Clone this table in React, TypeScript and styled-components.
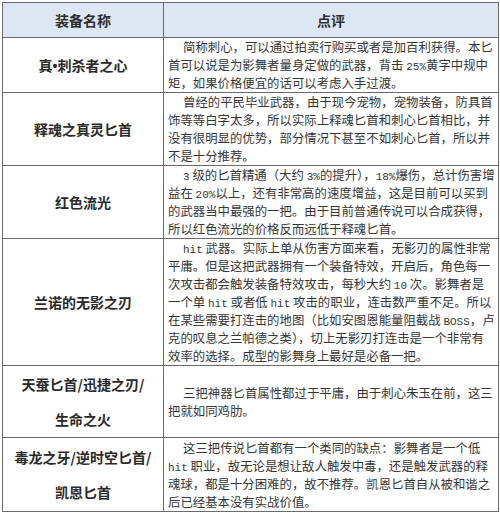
// -- basic library --
import React from 'react';
import styled, { createGlobalStyle } from 'styled-components';

// -- external datas --
type Item = { name: string[]; lines: string[]; height: number };

const items: Item[] = [
  {
    name: ['真•刺杀者之心'],
    height: 55,
    lines: [
      '简称刺心，可以通过拍卖行购买或者是加百利获得。本匕',
      '首可以说是为影舞者量身定做的武器，背击 25%黄字中规中',
      '矩，如果价格便宜的话可以考虑入手过渡。',
    ],
  },
  {
    name: ['释魂之真灵匕首'],
    height: 72,
    lines: [
      '曾经的平民毕业武器，由于现今宠物，宠物装备，防具首',
      '饰等等白字太多，所以实际上释魂匕首和刺心匕首相比，并',
      '没有很明显的优势，部分情况下甚至不如刺心匕首，所以并',
      '不是十分推荐。',
    ],
  },
  {
    name: ['红色流光'],
    height: 73,
    lines: [
      '3 级的匕首精通（大约 3%的提升），18%爆伤，总计伤害增',
      '益在 20%以上，还有非常高的速度增益，这是目前可以买到',
      '的武器当中最强的一把。由于目前普通传说可以合成获得，',
      '所以红色流光的价格反而远低于释魂匕首。',
    ],
  },
  {
    name: ['兰诺的无影之刃'],
    height: 127,
    lines: [
      'hit 武器。实际上单从伤害方面来看，无影刃的属性非常',
      '平庸。但是这把武器拥有一个装备特效，开启后，角色每一',
      '次攻击都会触发装备特效攻击，每秒大约 10 次。影舞者是',
      '一个单 hit 或者低 hit 攻击的职业，连击数严重不足。所以',
      '在某些需要打连击的地图（比如安图恩能量阻截战 BOSS，卢',
      '克的叹息之兰帕德之类），切上无影刃打连击是一个非常有',
      '效率的选择。成型的影舞身上最好是必备一把。',
    ],
  },
  {
    name: ['天蚕匕首/迅捷之刃/', '生命之火'],
    height: 72,
    lines: ['三把神器匕首属性都过于平庸，由于刺心朱玉在前，这三', '把就如同鸡肋。'],
  },
  {
    name: ['毒龙之牙/逆时空匕首/', '凯恩匕首'],
    height: 74,
    lines: [
      '这三把传说匕首都有一个类同的缺点：影舞者是一个低',
      'hit 职业，故无论是想让敌人触发中毒，还是触发武器的释',
      '魂球，都是十分困难的，故不推荐。凯恩匕首自从被和谐之',
      '后已经基本没有实战价值。',
    ],
  },
];

// ASCII 部分は等幅の細い字体で表示します。
const renderLine = (text: string) =>
  text.split(/([A-Za-z0-9%]+)/).map((part, i) =>
    /^[A-Za-z0-9%]+$/.test(part) ? <Latin key={i}>{part}</Latin> : <React.Fragment key={i}>{part}</React.Fragment>,
  );

// 名前の中の「•」だけ幅の狭い字体にします。
const renderName = (text: string) =>
  text.split(/(•)/).map((part, i) =>
    part === '•' ? <Dot key={i}>•</Dot> : <React.Fragment key={i}>{part}</React.Fragment>,
  );

// -- main component --
const App: React.FC = () => {
  // -- render part --
  return (
    <>
      <GlobalStyle />
      <Page>
        <Table>
          <colgroup>
            <col style={{ width: 161 }} />
            <col style={{ width: 335 }} />
          </colgroup>
          <thead>
            <HeadRow>
              <HeadCell>装备名称</HeadCell>
              <HeadCell>点评</HeadCell>
            </HeadRow>
          </thead>
          <tbody>
            {items.map((item) => (
              <Row key={item.name.join('')} $height={item.height}>
                <NameCell>
                  {item.name.map((n) => (
                    <NameLine key={n} $tall={item.name.length > 1}>
                      {renderName(n)}
                    </NameLine>
                  ))}
                </NameCell>
                <CommentCell>
                  {item.lines.map((l, i) => (
                    <Line key={l} $first={i === 0}>
                      {renderLine(l)}
                    </Line>
                  ))}
                </CommentCell>
              </Row>
            ))}
          </tbody>
        </Table>
      </Page>
    </>
  );
};

// -- styled components --

const GlobalStyle = createGlobalStyle`
  html, body {
    margin: 0;
    background: #ffffff;
  }
  body {
    font-family: "Noto Sans CJK SC", "Noto Sans", sans-serif;
    color: #333333;
  }
`;

const Page = styled.div`
  width: 500px;
  height: 517px;
  padding: 2px 0 0 2px;
  box-sizing: border-box;
  overflow: hidden;
`;

const Table = styled.table`
  border-collapse: collapse;
  table-layout: fixed;
  width: 496px;
  border: 1px solid #5a5a5a;
`;

const HeadRow = styled.tr`
  height: 35px;
  background: #dde7f3;
`;

const HeadCell = styled.th`
  border: 1px solid #6a6a6a;
  font-size: 14px;
  line-height: 20px;
  font-weight: 700;
  color: #2e2e2e;
  text-align: center;
  vertical-align: middle;
  padding: 0;
`;

const Row = styled.tr<{ $height: number }>`
  height: ${(p) => p.$height}px;
`;

const NameCell = styled.td`
  border: 1px solid #6a6a6a;
  font-size: 14px;
  font-weight: 700;
  color: #2a2a2a;
  text-align: center;
  vertical-align: middle;
  padding: 0;
  white-space: nowrap;
`;

const NameLine = styled.div<{ $tall: boolean }>`
  height: ${(p) => (p.$tall ? '35px' : '20px')};
  line-height: ${(p) => (p.$tall ? '35px' : '20px')};
`;

const Dot = styled.span`
  font-family: "Liberation Sans", sans-serif;
  font-weight: 700;
  line-height: 0;
`;

const CommentCell = styled.td`
  border: 1px solid #6a6a6a;
  vertical-align: middle;
  padding: 0 4px;
  font-size: 12.4px;
  line-height: 18px;
  color: #363636;
`;

const Line = styled.div<{ $first: boolean }>`
  height: 18px;
  white-space: nowrap;
  padding-left: ${(p) => (p.$first ? '15px' : '0')};
`;

const Latin = styled.span`
  font-family: "Liberation Mono", monospace;
  font-size: 11px;
  line-height: 0;
`;

// -- finally export part --

export default App;
